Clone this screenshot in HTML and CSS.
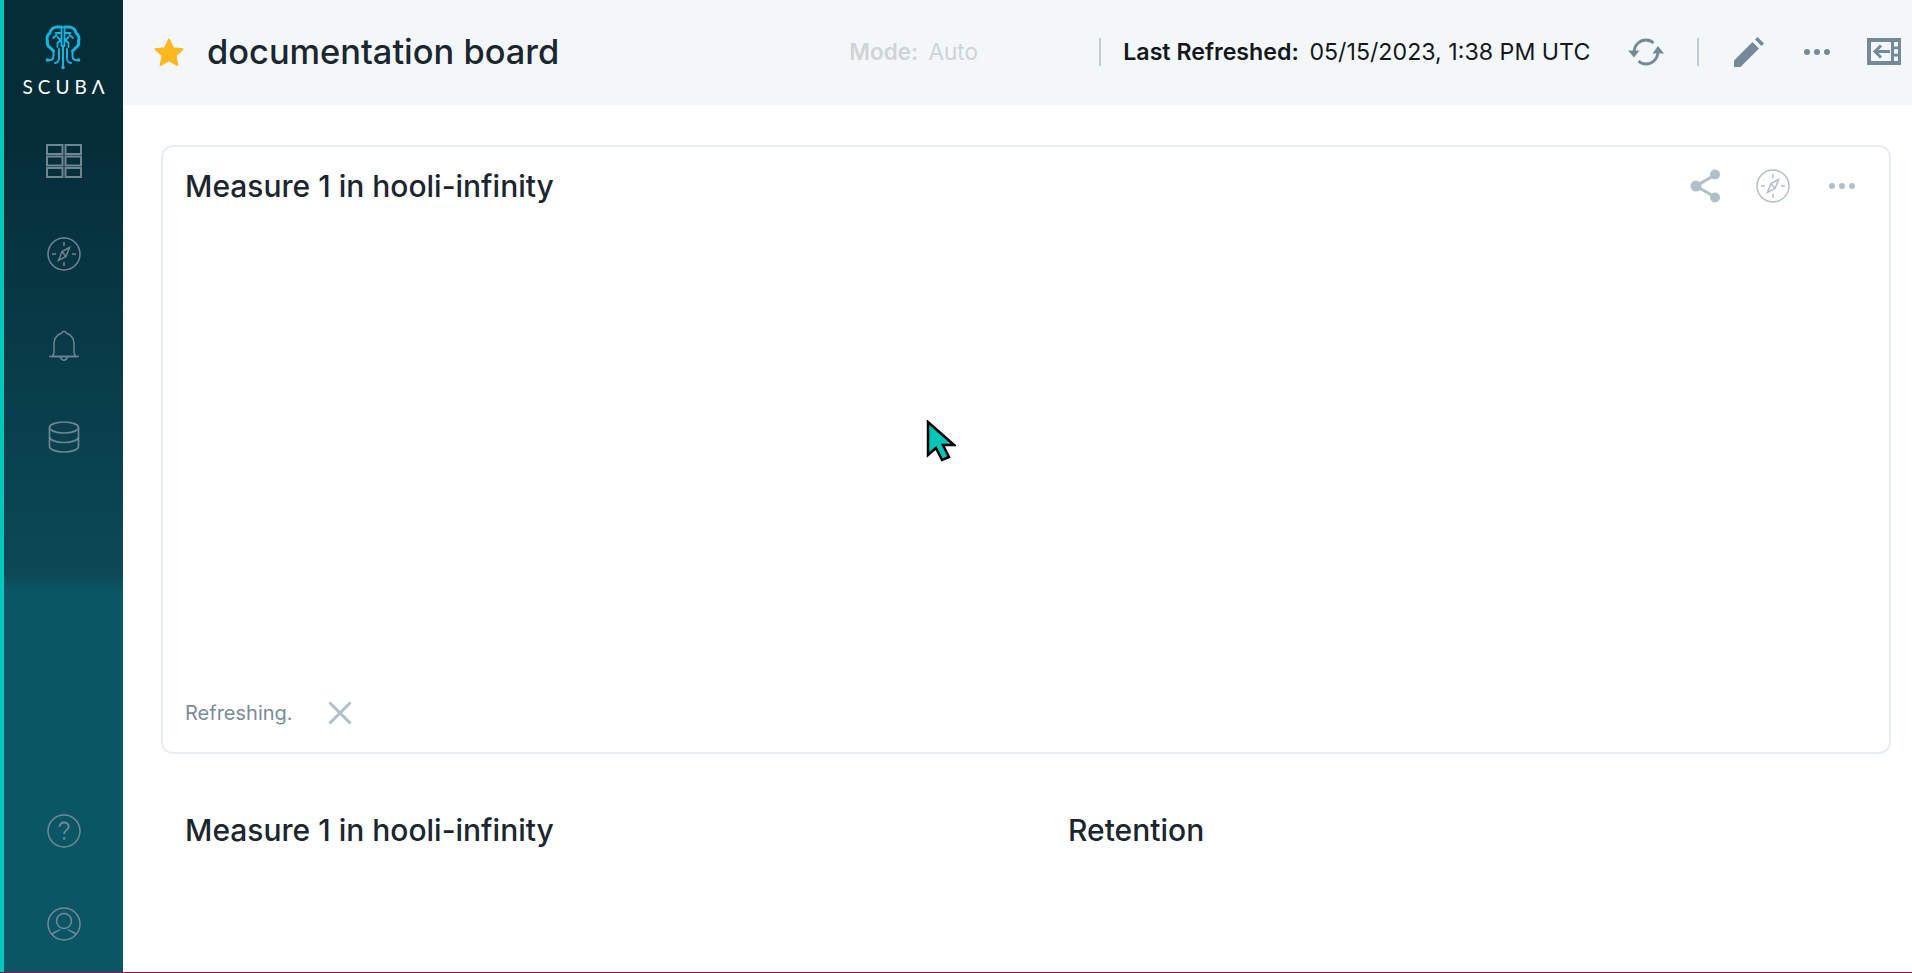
FILE: index.html
```html
<!DOCTYPE html>
<html lang="en">

<head>
  <meta charset="UTF-8" />
  <title>documentation board</title>
  <link rel="stylesheet" href="styles.css">
</head>

<body>
  <div class="app">
    <nav class="sidebar">
      <div class="logo">
        <svg class="logo-mark" viewBox="0 0 36 46" width="36" height="46" fill="none" stroke="#12b5e2" stroke-width="1.800" stroke-linecap="round" stroke-linejoin="round">
          <path d="M16.500 2h-4C8.500 2 5.500 4.500 5 8 2.500 9.500 1.500 13 2.500 16c-.8 3 .5 5.500 3 7l3 3" stroke-width="3" />
          <path d="M19.500 2h4c4 0 7 2.500 7.500 6 2.500 1.500 3.500 5 2.500 8 .8 3-.5 5.500-3 7l-3 3" stroke-width="3" />
          <path d="M16.500 2v19M19.500 2v19M16.500 8h-6M19.500 8h6M8 13l3.500-3M28 13l-3.500-3M12.500 12l3 3-3 3v4M23.500 12l-3 3 3 3v4" />
          <path d="M18 21v20.500M14 24v9c0 3-2 5-4 5M22 24v9c0 3 2 5 4 5M8.500 26v5c0 3.500-2.500 5-6 4M27.500 26v5c0 3.500 2.500 5 6 4" stroke-width="2" />
          <circle cx="18" cy="42.500" r="1.800" fill="#12b5e2" stroke="none" />
          <circle cx="2.500" cy="35" r="1.800" fill="#12b5e2" stroke="none" />
          <circle cx="33.500" cy="35" r="1.800" fill="#12b5e2" stroke="none" />
        </svg>
        <div class="logo-text">SCUBΛ</div>
      </div>

      <a class="nav-item nav-boards" href="#">
        <svg viewBox="0 0 36 34" width="36" height="34" fill="none" stroke="#6f8592" stroke-width="2">
          <rect x="1" y="1" width="15.500" height="9" />
          <rect x="19.500" y="1" width="15.500" height="9" />
          <rect x="1" y="12.500" width="15.500" height="9" />
          <rect x="19.500" y="12.500" width="15.500" height="9" />
          <rect x="1" y="24" width="15.500" height="9" />
          <rect x="19.500" y="24" width="15.500" height="9" />
        </svg>
      </a>
      <a class="nav-item nav-explore" href="#">
        <svg viewBox="0 0 34 34" width="34" height="34" fill="none" stroke="#6f8592" stroke-width="1.500">
          <circle cx="17" cy="17" r="16" />
          <path d="M17 5v4M17 25v4M5 17h4M25 17h4" />
          <path d="M22.500 10.500l-7.500 4-3.500 9 7.500-4z" />
          <path d="M15 14.500l4 5" />
        </svg>
      </a>
      <a class="nav-item nav-alerts" href="#">
        <svg viewBox="0 0 32 32" width="32" height="32" fill="none" stroke="#6f8592" stroke-width="1.500" stroke-linejoin="round">
          <path d="M16 1.500c1.200 0 2 .8 2.300 1.800C22.500 4.300 26 8 26 13v9c0 2 .5 3.500 2 4.500H4c1.500-1 2-2.500 2-4.500v-9c0-5 3.500-8.700 7.700-9.700.3-1 1.100-1.800 2.300-1.800z" />
          <path d="M1 26.500h30" />
          <path d="M12.500 27c.5 2 1.800 3.200 3.500 3.200s3-1.200 3.500-3.200" />
        </svg>
      </a>
      <a class="nav-item nav-data" href="#">
        <svg viewBox="0 0 32 32" width="32" height="32" fill="none" stroke="#6f8592" stroke-width="1.700">
          <ellipse cx="16" cy="6.500" rx="14.500" ry="5.500" />
          <path d="M1.500 6.500v19c0 3 6.500 5.500 14.500 5.500s14.500-2.500 14.500-5.500v-19" />
          <path d="M1.500 16c0 3 6.500 5.500 14.500 5.500s14.500-2.500 14.500-5.500" />
        </svg>
      </a>

      <a class="nav-item nav-help" href="#">
        <svg viewBox="0 0 34 34" width="34" height="34" fill="none" stroke="#75899a" stroke-width="1.500">
          <circle cx="17" cy="17" r="16" />
          <path d="M12.500 13c0-2.700 2-4.500 4.700-4.500 2.600 0 4.500 1.700 4.500 4 0 3.700-4.500 3.500-4.500 7.500" stroke-width="1.800" />
          <circle cx="17.200" cy="24.500" r="1.300" fill="#75899a" stroke="none" />
        </svg>
      </a>
      <a class="nav-item nav-user" href="#">
        <svg viewBox="0 0 34 34" width="34" height="34" fill="none" stroke="#75899a" stroke-width="1.500">
          <circle cx="17" cy="17" r="16" />
          <circle cx="17" cy="14" r="7.500" />
          <path d="M5 27.500c1-2 6-3 8-5M29 27.500c-1-2-6-3-8-5" />
        </svg>
      </a>
    </nav>

    <main class="main">
      <header class="topbar">
        <svg class="star" viewBox="0 0 30 28" width="30" height="28">
          <path d="M15 1l4.200 8.900 9.600 1.200-7 6.700 1.800 9.600L15 22.700l-8.600 4.700 1.800-9.600-7-6.700 9.600-1.200z" fill="#ffb71f" stroke="#ffb71f" stroke-width="1.500" stroke-linejoin="round" />
        </svg>
        <h1>documentation board</h1>

        <div class="mode"><b>Mode:</b> Auto</div>
        <span class="divider divider-left"></span>
        <div class="refreshed"><b>Last Refreshed:</b> 05/15/2023, 1:38 PM UTC</div>

        <svg class="tool tool-refresh" viewBox="0 0 36 28" width="36" height="28" fill="none" stroke="#75899a" stroke-width="2.800">
          <path d="M6 13C7 6.500 12 2 18 2c3 0 5.500 1 7.500 3" />
          <path d="M30 15c-1 6.500-6 11-12 11-3 0-5.500-1-7.500-3" />
          <path d="M0 12.500h11.500l-5.500 7z" fill="#75899a" stroke="none" />
          <path d="M24.500 15.500H36l-6-7.500z" fill="#75899a" stroke="none" />
        </svg>
        <span class="divider divider-right"></span>
        <svg class="tool tool-edit" viewBox="0 0 30 30" width="30" height="30" fill="#75899a">
          <path d="M0 23.500L18.500 5l6.500 6.500L6.500 30H0z" />
          <path d="M21 2.500L23.500 0 30 6.500l-2.500 2.500z" />
        </svg>
        <svg class="tool tool-more" viewBox="0 0 26 6" width="26" height="6" fill="#75899a">
          <circle cx="3" cy="3" r="3" />
          <circle cx="13" cy="3" r="3" />
          <circle cx="23" cy="3" r="3" />
        </svg>
        <svg class="tool tool-collapse" viewBox="0 0 34 27" width="34" height="27">
          <rect width="34" height="27" fill="#75899a" />
          <rect x="4" y="4" width="20" height="19" fill="#f3f7fa" />
          <rect x="27" y="4" width="4" height="4.500" fill="#f3f7fa" />
          <rect x="27" y="11.200" width="4" height="4.500" fill="#f3f7fa" />
          <rect x="27" y="18.500" width="4" height="4.500" fill="#f3f7fa" />
          <path d="M23 13.500H8M14 7.500l-6 6 6 6" fill="none" stroke="#75899a" stroke-width="3" />
        </svg>
      </header>

      <div class="board">
        <section class="card">
          <div class="card-head">
            <h2>Measure 1 in hooli-infinity</h2>
            <div class="card-tools">
              <svg viewBox="0 0 32 36" width="32" height="36" fill="#b1bfca" stroke="#b1bfca">
                <path d="M25 7L6 18l19 11" fill="none" stroke-width="3" />
                <circle cx="25" cy="6.500" r="5" stroke="none" />
                <circle cx="6" cy="18" r="5.500" stroke="none" />
                <circle cx="25" cy="29.500" r="5" stroke="none" />
              </svg>
              <svg viewBox="0 0 34 34" width="34" height="34" fill="none" stroke="#b1bfca" stroke-width="1.500">
                <circle cx="17" cy="17" r="16" />
                <path d="M17 5v4M17 25v4M5 17h4M25 17h4" />
                <path d="M22.500 10.500l-7.500 4-3.500 9 7.500-4z" />
                <path d="M15 14.500l4 5" />
              </svg>
              <svg class="card-more" viewBox="0 0 26 6" width="26" height="6" fill="#b1bfca">
                <circle cx="3" cy="3" r="3" />
                <circle cx="13" cy="3" r="3" />
                <circle cx="23" cy="3" r="3" />
              </svg>
            </div>
          </div>
          <div class="card-foot">
            <span>Refreshing.</span>
            <svg viewBox="0 0 24 24" width="24" height="24" fill="none" stroke="#b1bfca" stroke-width="3">
              <path d="M1.500 1.500l21 21M22.500 1.500l-21 21" />
            </svg>
          </div>
        </section>

        <div class="chart-row">
          <h2>Measure 1 in hooli-infinity</h2>
          <h2>Retention</h2>
        </div>
      </div>
    </main>
  </div>

  <svg class="pointer" viewBox="0 0 30 42" width="30" height="42">
    <path d="M2 2v33l8-7 6 12 7-3-6-12h11z" fill="#00c4b8" stroke="#000" stroke-width="2.500" />
  </svg>
</body>

</html>
```

FILE: styles.css
```css
* {
  box-sizing: border-box;
}

body {
  margin: 0;
  font-family: Inter, "Liberation Sans", sans-serif;
  background: #fff;
  color: #1b262f;
}

.app {
  display: flex;
  height: 973px;
  overflow: hidden;
  border-bottom: 1px solid #8f1d4b;
}

h1,
h2 {
  margin: 0;
  font-weight: 500;
}

h2 {
  font-size: 30px;
}

/* sidebar */
.sidebar {
  width: 123px;
  flex: none;
  display: flex;
  flex-direction: column;
  align-items: center;
  border-left: 4px solid #00c9bb;
  background: linear-gradient(#052d38 0, #052d38 130px, #0b4957 575px, #0a5664 590px, #0a5664 100%);
}

.logo {
  display: flex;
  flex-direction: column;
  align-items: center;
  height: 117px;
  padding-top: 25px;
}

.logo-text {
  margin-top: 6px;
  margin-right: -5px;
  color: #fff;
  font-family: Lato, sans-serif;
  font-size: 19px;
  line-height: 20px;
  letter-spacing: 5px;
  white-space: nowrap;
}

.nav-item {
  display: block;
  line-height: 0;
}

.nav-boards {
  margin-top: 27px;
}

.nav-explore,
.nav-alerts,
.nav-data {
  margin-top: 59px;
}

.nav-help {
  margin-top: auto;
}

.nav-user {
  margin-top: 59px;
  margin-bottom: 31px;
}

/* top bar */
.main {
  flex: 1;
  min-width: 0;
}

.topbar {
  height: 105px;
  display: flex;
  align-items: center;
  padding: 0 10px 2px 31px;
  background: #f3f7fa;
}

.topbar h1 {
  margin-left: 23px;
  font-size: 34.4px;
  white-space: nowrap;
}

.mode {
  margin-left: 290px;
  width: 250px;
  color: #d0d3d7;
  font-size: 22.500px;
}

.mode b,
.refreshed b {
  font-weight: 600;
  margin-right: 4px;
}

.divider {
  width: 2px;
  height: 28px;
  background: #c2ccd4;
  flex: none;
}

.refreshed {
  margin-left: 22px;
  color: #14181c;
  font-size: 23.200px;
  white-space: nowrap;
}

.tool {
  flex: none;
}

.tool-refresh {
  margin-left: 38px;
}

.divider-right {
  margin-left: 33px;
}

.tool-edit {
  margin-left: 35px;
}

.tool-more {
  margin-left: 40px;
}

.tool-collapse {
  margin-left: 37px;
}

/* board */
.board {
  padding: 40px 21px 0 38px;
}

.card {
  height: 609px;
  display: flex;
  flex-direction: column;
  padding: 20px 34px 27px 22px;
  border: 2px solid #e8eef3;
  border-radius: 12px;
}

.card-head {
  display: flex;
  justify-content: space-between;
  align-items: center;
}

.card-tools {
  display: flex;
  align-items: center;
  gap: 34px;
  margin-top: 1px;
}

.card-more {
  margin-left: 5px;
}

.card-foot {
  margin-top: auto;
  display: flex;
  align-items: center;
  gap: 35px;
  color: #7b8b9a;
  font-size: 20px;
}

.chart-row {
  display: grid;
  grid-template-columns: 883px 1fr;
  padding: 58px 0 0 24px;
}

.pointer {
  position: absolute;
  left: 926px;
  top: 420px;
}
```
